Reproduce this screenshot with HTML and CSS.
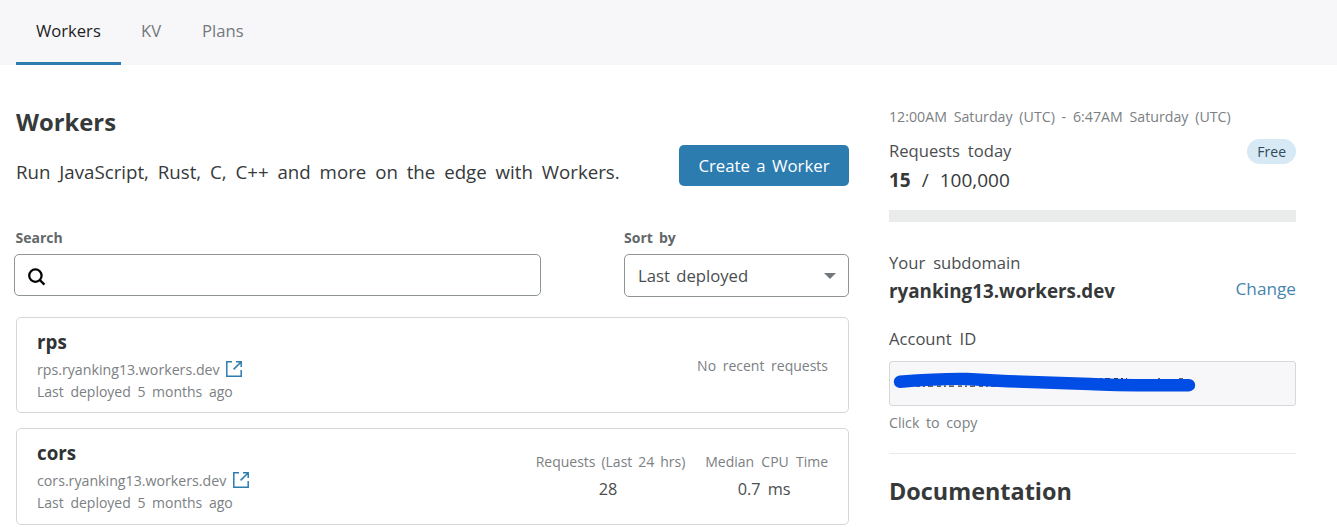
FILE: index.html
```html
<!DOCTYPE html>
<html lang="en">
<head>
<meta charset="utf-8">
<title>Workers</title>
<link rel="stylesheet" href="styles.css">
</head>
<body>
<nav class="tabs">
  <a class="tab tab-active">Workers</a>
  <a class="tab">KV</a>
  <a class="tab">Plans</a>
</nav>
<div class="page">
  <main>
    <header class="intro">
      <div>
        <h1 class="title">Workers</h1>
        <p class="lead">Run JavaScript, Rust, C, C++ and more on the edge with Workers.</p>
      </div>
      <button class="create">Create a Worker</button>
    </header>
    <div class="controls">
      <div class="search">
        <div class="label">Search</div>
        <div class="search-box">
          <svg width="18" height="18" viewBox="0 0 18 18" fill="none" stroke="#000" stroke-width="2.3"><circle cx="7.4" cy="7.6" r="6.2"/><path d="M11.8 12l4.6 4.6"/></svg>
        </div>
      </div>
      <div class="sort">
        <div class="label">Sort by</div>
        <div class="select"><span>Last deployed</span><i class="caret"></i></div>
      </div>
    </div>
    <section class="card">
      <div>
        <h2 class="name">rps</h2>
        <div class="url"><span>rps.ryanking13.workers.dev</span><svg width="16" height="16" viewBox="0 0 16 16" fill="none" stroke="#2c7cb0" stroke-width="1.5"><path d="M6 .8H.8v14.4h14.4V9M10 .8h5.2V6M15 1L7.6 8.4"/></svg></div>
        <div class="meta">Last deployed 5 months ago</div>
      </div>
      <div class="none">No recent requests</div>
    </section>
    <section class="card card-last">
      <div>
        <h2 class="name">cors</h2>
        <div class="url"><span>cors.ryanking13.workers.dev</span><svg width="16" height="16" viewBox="0 0 16 16" fill="none" stroke="#2c7cb0" stroke-width="1.5"><path d="M6 .8H.8v14.4h14.4V9M10 .8h5.2V6M15 1L7.6 8.4"/></svg></div>
        <div class="meta">Last deployed 5 months ago</div>
      </div>
      <div class="stats">
        <div class="stat"><div class="stat-label">Requests (Last 24 hrs)</div><div class="stat-value">28</div></div>
        <div class="stat"><div class="stat-label stat-label-wide">Median CPU Time</div><div class="stat-value">0.7 ms</div></div>
      </div>
    </section>
  </main>
  <aside>
    <div class="period">12:00AM Saturday (UTC) - 6:47AM Saturday (UTC)</div>
    <div class="row"><span class="caption">Requests today</span><span class="pill">Free</span></div>
    <div class="usage"><b>15</b><span>/</span><span>100,000</span></div>
    <div class="bar"></div>
    <div class="caption">Your subdomain</div>
    <div class="row subdomain"><b>ryanking13.workers.dev</b><a class="change">Change</a></div>
    <div class="caption">Account ID</div>
    <div class="account">
      <svg width="405" height="43" viewBox="0 0 405 43" fill="none"><path stroke="#333" stroke-width="1.2" stroke-dasharray="4 3 2 3 5 4" d="M26 24.2H112M203 16.6h34M268 16.8h2M289 16.8h4"/><path stroke="#004de6" stroke-width="12.4" stroke-linecap="round" stroke-linejoin="round" d="M10 19.7C32 18 55 16.4 77 17L118 19.2 200 22C225 23.6 240 23.4 299 23.2"/></svg>
    </div>
    <div class="hint">Click to copy</div>
    <h2 class="docs">Documentation</h2>
  </aside>
</div>
</body>
</html>
```
FILE: styles.css
```css
* { box-sizing: border-box; }
body {
  margin: 0;
  height: 532px;
  overflow: hidden;
  background: #fff;
  color: #36393a;
  font-family: "Open Sans", "Noto Sans", sans-serif;
  font-size: 14px;
}
h1, h2, p { margin: 0; }

.tabs { display: flex; height: 65px; padding-left: 16px; background: #f7f7f9; }
.tab { padding: 0 20px; font-size: 16.6px; line-height: 62px; color: #72777b; }
.tab + .tab + .tab { padding-left: 21px; }
.tab-active { width: 105px; color: #222; border-bottom: 3px solid #2c7cb0; }

.page { display: grid; grid-template-columns: 833px 407px; column-gap: 40px; padding: 42px 0 0 16px; }

.intro { display: flex; justify-content: space-between; align-items: flex-end; }
.title { font-size: 23.8px; font-weight: 700; line-height: 30px; margin-bottom: 21px; }
.lead { font-size: 18.7px; line-height: 28px; word-spacing: 4px; }
.create {
  width: 170px; height: 41px; padding: 0; border: 0; border-radius: 5px;
  background: #2c7cb0; color: #fff; font: 16.8px "Open Sans", sans-serif; word-spacing: 2px;
}

.controls { display: flex; justify-content: space-between; margin: 43px 0 20px -2px; }
.search { width: 527px; }
.sort { width: 225px; }
.label { margin: 0 0 8px; font-size: 14px; font-weight: 700; line-height: 17px; color: #62676a; word-spacing: 2.5px; }
.search .label { padding-left: 1.5px; }
.search-box { display: flex; align-items: center; height: 42px; padding: 3px 0 0 13px; border: 1px solid #8f9496; border-radius: 5px; }
.select {
  display: flex; align-items: center; justify-content: space-between; height: 43px; padding: 0 12px 0 13px;
  border: 1px solid #8f9496; border-radius: 5px; font-size: 16.7px; word-spacing: 2px; color: #4a4e50;
}
.caret { border: 6px solid transparent; border-top-color: #72777b; border-bottom: 0; }

.card {
  display: flex; justify-content: space-between; height: 96px; padding: 12px 20px 0;
  border: 1px solid #d5d7d8; border-radius: 5px; margin-bottom: 15px;
  color: #7b8083; word-spacing: 3px;
}
.card-last { height: 97px; margin: 0; }
.name { font-size: 18.8px; font-weight: 700; line-height: 24px; margin-bottom: 4px; color: #303334; }
.url { display: flex; align-items: center; gap: 6.5px; height: 22px; font-size: 14.2px; }
.meta { line-height: 23px; }
.none { line-height: 20px; padding-top: 26px; }
.stats { display: flex; gap: 20px; padding-top: 11px; text-align: center; }
.stat-label { line-height: 20px; word-spacing: 2.3px; }
.stat-label-wide { word-spacing: 3.5px; }
.stat-value { font-size: 16.3px; line-height: 24px; margin-top: 5px; padding-right: 5px; color: #4a4e50; }

.period { font-size: 14.2px; line-height: 20px; margin-bottom: 12px; color: #7b8083; word-spacing: 3.1px; }
.row { display: flex; justify-content: space-between; align-items: center; height: 25px; }
.caption { font-size: 16.6px; line-height: 24px; word-spacing: 3.6px; color: #4a4e50; }
.row .caption { padding-bottom: 1px; }
.pill { padding: 0 10px; border-radius: 13px; background: #d6e9f5; color: #314b5a; line-height: 25px; }
.usage { display: flex; gap: 11px; margin-top: 2px; font-size: 19px; line-height: 28px; }
.bar { height: 12px; margin: 16px 0 29px; background: #eaebeb; }
.subdomain { height: 28px; margin: 2px 0 22px; font-size: 18.8px; }
.change { padding-bottom: 5px; font-size: 17.2px; color: #4785ae; }
.account { height: 45px; margin-top: 10px; border: 1px solid #d5d7d8; border-radius: 3px; background: #f7f7f9; }
.account svg { display: block; }
.hint { margin: 7px 0 20px; font-size: 14.2px; line-height: 20px; word-spacing: 3px; color: #7b8083; }
.docs { padding-top: 21px; border-top: 1px solid #e8e9e9; font-size: 23.4px; font-weight: 700; line-height: 32px; }
```
